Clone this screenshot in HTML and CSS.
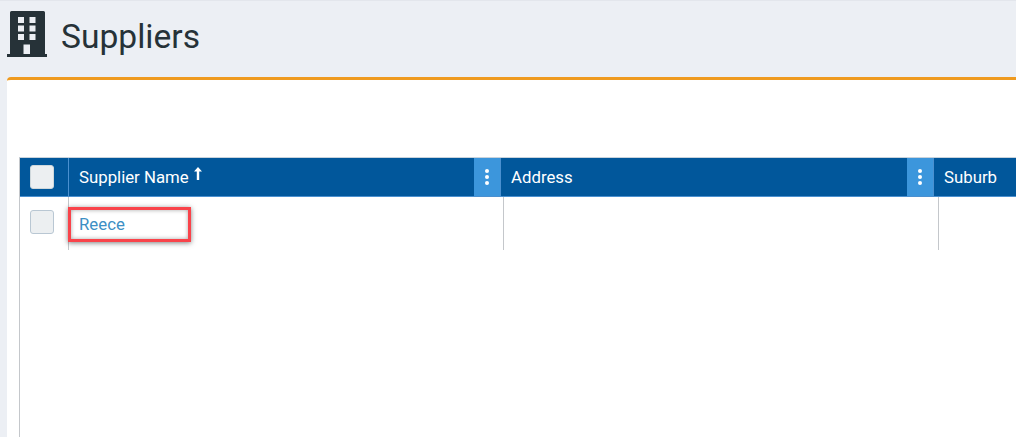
FILE: index.html
```html
<!DOCTYPE html>
<html lang="en">
<head>
<meta charset="utf-8">
<title>Suppliers</title>
<link rel="stylesheet" href="styles.css">
</head>
<body>
<header class="page-head">
  <svg class="head-icon" viewBox="0 0 40 46" width="40" height="46" aria-hidden="true">
    <path fill="#263238" d="M3 1.500A1.500 1.500 0 0 1 4.500 0h32A1.500 1.500 0 0 1 38 1.500V43h2v3H0V43H3Z"/>
    <g fill="#eceff4">
      <rect x="11" y="6" width="6" height="6"/><rect x="22.500" y="6" width="6" height="6"/>
      <rect x="11" y="14.500" width="6" height="6"/><rect x="22.500" y="14.500" width="6" height="6"/>
      <rect x="11" y="23" width="6" height="6"/><rect x="22.500" y="23" width="6" height="6"/>
      <rect x="16.500" y="33.500" width="6.500" height="9.500"/>
    </g>
  </svg>
  <h1 class="title">Suppliers</h1>
</header>
<main class="card">
  <div class="grid">
    <div class="grid-head">
      <div class="hcell check-col"><span class="checkbox head-check"></span></div>
      <div class="hcell name-col">
        <span class="hlabel">Supplier Name</span>
        <svg class="sort" viewBox="0 0 8 13" width="8" height="13" aria-hidden="true"><path fill="#fff" d="M4 0 8 4.500H5.200V13H2.800V4.500H0Z"/></svg>
        <span class="menu"><i></i><i></i><i></i></span>
      </div>
      <div class="hcell addr-col">
        <span class="hlabel">Address</span>
        <span class="menu"><i></i><i></i><i></i></span>
      </div>
      <div class="hcell suburb-col"><span class="hlabel">Suburb</span></div>
    </div>
    <div class="grid-row">
      <div class="cell check-col"><span class="checkbox"></span></div>
      <div class="cell name-col"><a class="link" href="#">Reece</a><span class="highlight"></span></div>
      <div class="cell addr-col"></div>
      <div class="cell suburb-col"></div>
    </div>
  </div>
</main>
</body>
</html>
```
FILE: styles.css
```css
* { box-sizing: border-box; }
html, body { margin: 0; height: 100%; overflow: hidden; }
body {
  background: #eceff4;
  font-family: Roboto, "Liberation Sans", sans-serif;
  color: #263238;
  border-top: 1px solid #e3e6ec;
  display: flex;
  flex-direction: column;
}
.page-head {
  height: 76px;
  padding: 10px 0 0 7px;
  display: flex;
  align-items: flex-start;
  gap: 14px;
  flex: none;
}
.head-icon { display: block; flex: none; }
.title {
  margin: 3px 0 0;
  font-size: 33.6px;
  line-height: 46px;
  font-weight: 400;
}
.card {
  flex: 1;
  margin-left: 7px;
  background: #fff;
  border-top: 3px solid #ef9a1f;
  border-top-left-radius: 4px;
  padding: 77px 0 0 12px;
}
.grid {
  height: 100%;
  border-left: 1px solid #c4c7cb;
  border-top: 1px solid #c9d3dc;
}
.grid-head {
  display: flex;
  height: 39px;
  background: #01579b;
  border-bottom: 1px solid #4a90d0;
  color: #fff;
}
.grid-row { display: flex; height: 53px; }
.check-col { width: 48px; flex: none; }
.name-col { width: 432px; flex: none; }
.addr-col { width: 433px; flex: none; }
.suburb-col { flex: 1; }
.hcell {
  display: flex;
  align-items: center;
  position: relative;
  padding-left: 10px;
  font-size: 16.8px;
}
.hcell.name-col, .hcell.addr-col, .hcell.suburb-col { border-left: 1px solid #4a90d0; }
.hlabel { line-height: 38px; }
.sort { margin: -7px 0 0 5px; }
.menu {
  position: absolute;
  right: 0;
  top: 0;
  width: 26px;
  height: 38px;
  background: #3c96dc;
  display: flex;
  flex-direction: column;
  align-items: center;
  justify-content: center;
  gap: 2px;
}
.menu i {
  width: 4px;
  height: 4px;
  border-radius: 50%;
  background: #fff;
}
.checkbox {
  display: block;
  width: 24px;
  height: 24px;
  border: 1px solid #b9c7d3;
  border-radius: 3px;
  background: #eceff1;
}
.head-check { border-color: #cfd8dc; }
.cell { position: relative; padding: 13px 0 0 10px; font-size: 16.8px; }
.cell.name-col, .cell.addr-col, .cell.suburb-col { border-left: 1px solid #c4c7cb; }
.cell.name-col, .cell.addr-col { width: 435px; }
.link { color: #3d8fc4; text-decoration: none; line-height: 28px; display: block; }
.highlight {
  position: absolute;
  left: -1px;
  top: 10px;
  width: 123px;
  height: 35px;
  border: 3px solid #f9434a;
  box-shadow: 0 1px 5px rgba(0, 0, 0, 0.5), inset 0 0 4px rgba(0, 0, 0, 0.35);
}
```
